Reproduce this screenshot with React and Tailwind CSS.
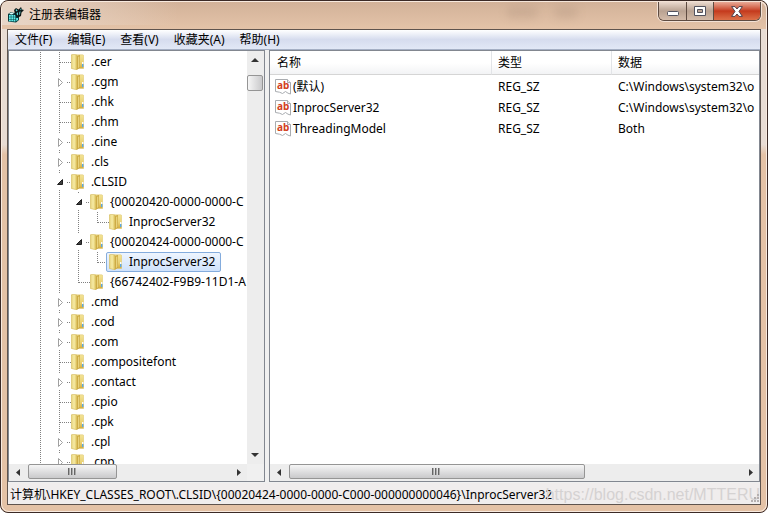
import React from 'react';

const treeItems = [
    { label: '.cer', cells: ['line', 'tee'] },
    { label: '.cgm', cells: ['line', 'closed'] },
    { label: '.chk', cells: ['line', 'tee'] },
    { label: '.chm', cells: ['line', 'tee'] },
    { label: '.cine', cells: ['line', 'closed'] },
    { label: '.cls', cells: ['line', 'closed'] },
    { label: '.CLSID', cells: ['line', 'open'] },
    { label: '{00020420-0000-0000-C', cells: ['line', 'line', 'open'] },
    { label: 'InprocServer32', cells: ['line', 'line', 'line', 'end'] },
    { label: '{00020424-0000-0000-C', cells: ['line', 'line', 'open'] },
    { label: 'InprocServer32', cells: ['line', 'line', 'line', 'end'], selected: true },
    { label: '{66742402-F9B9-11D1-A', cells: ['line', 'line', 'end'] },
    { label: '.cmd', cells: ['line', 'closed'] },
    { label: '.cod', cells: ['line', 'closed'] },
    { label: '.com', cells: ['line', 'closed'] },
    { label: '.compositefont', cells: ['line', 'tee'] },
    { label: '.contact', cells: ['line', 'closed'] },
    { label: '.cpio', cells: ['line', 'tee'] },
    { label: '.cpk', cells: ['line', 'tee'] },
    { label: '.cpl', cells: ['line', 'closed'] },
    { label: '.cpp', cells: ['line', 'closed'] },
];

const values = [
    { name: '(默认)', type: 'REG_SZ', data: 'C:\\Windows\\system32\\o' },
    { name: 'InprocServer32', type: 'REG_SZ', data: 'C:\\Windows\\system32\\o' },
    { name: 'ThreadingModel', type: 'REG_SZ', data: 'Both' },
];

const menus = ['文件(F)', '编辑(E)', '查看(V)', '收藏夹(A)', '帮助(H)'];

// Dotted guide line and expander for one level of the tree
const GuideCell = ({ kind }) => {
    const expander = kind === 'open' || kind === 'closed';

    return (
        <svg width="19" height="20" className="shrink-0 overflow-visible" shapeRendering="crispEdges" aria-hidden="true">
            <g stroke="#808080" strokeDasharray="1 1">
                {(kind === 'line' || kind === 'tee') && <path d="M9.5 0V20" />}
                {kind === 'end' && <path d="M9.5 0V11" />}
                {(kind === 'tee' || kind === 'end') && <path d="M10 10.5H21" />}
                {expander && <path d="M9.5 0V1M9.5 18V20M17 10.5H21" />}
            </g>
            {kind === 'closed' && (
                <path d="M8.5 6.5V14.5L12.5 10.5Z" fill="#fff" stroke="#a0a0a0" shapeRendering="auto" />
            )}
            {kind === 'open' && (
                <path d="M12.5 7.5V12.5H7.5Z" fill="#404040" stroke="#202020" shapeRendering="auto" />
            )}
        </svg>
    );
};

const FolderIcon = () => (
    <svg width="13" height="16" viewBox="0 0 13 16" className="shrink-0" aria-hidden="true">
        <defs>
            <linearGradient id="folderFront" x1="0" x2="1" y1="0" y2="0">
                <stop offset="0" stopColor="#e6d27a" />
                <stop offset="0.5" stopColor="#f6eba6" />
                <stop offset="1" stopColor="#dcc058" />
            </linearGradient>
            <linearGradient id="folderBack" x1="0" x2="0" y1="0" y2="1">
                <stop offset="0" stopColor="#f3e496" />
                <stop offset="0.6" stopColor="#e9d071" />
                <stop offset="1" stopColor="#d2aa3c" />
            </linearGradient>
        </defs>
        <path d="M5 .8H11.7Q12.7 .8 12.7 2V14.4H5Z" fill="url(#folderBack)" stroke="#dcc46c" strokeWidth=".5" />
        <path d="M5.5 2L9 1V13.6L6.5 15.6H5Z" fill="#caa63e" />
        <path d="M7 2.8L8.4 2.2V13L7 14.2Z" fill="#e8d27c" />
        <path d="M.3 1.2Q.3 .5 1.2 .5H4.4Q6 .8 6 2.2V15.7L4.5 15.5L.3 14.4Z" fill="url(#folderFront)" stroke="#d3b95c" strokeWidth=".6" />
        <rect x="11" y="8" width="1.4" height="2" fill="#f8fbff" />
        <rect x="11" y="10" width="1.4" height="3" fill="#5aa9e6" />
    </svg>
);

const StringIcon = () => (
    <svg width="16" height="16" viewBox="0 0 16 16" className="shrink-0" aria-hidden="true">
        <path d="M.5 .5H12.5L15.5 3.5V15L13 14.2L10.5 12.5L7.5 14.5L4.5 13.2L.5 12.5Z" fill="#fff" stroke="#a9acb0" />
        <path d="M12.5 .5V3.5H15.5" fill="#eee" stroke="#a9acb0" />
        <text x="2" y="10" fontFamily="Noto Sans" fontWeight="700" fontSize="10" fill="#d2401c">ab</text>
    </svg>
);

const RegistryIcon = () => (
    <svg width="16" height="16" viewBox="0 0 16 16" aria-hidden="true">
        <path d="M0 7L3 5L6 6L8 5L11 7V13L8 15.5L0 14.5Z" fill="#063a3d" />
        <path d="M3 5.5L6 6L4 7.5L1 7Z" fill="#d8ffff" />
        <path d="M1 8H2.8V9.8H1ZM3.3 8H5.1V9.8H3.3ZM5.6 8H7.4V9.8H5.6ZM1 10.3H2.8V12.1H1ZM3.3 10.3H5.1V12.1H3.3ZM5.6 10.3H7.4V12.1H5.6ZM1 12.6H2.8V14.2H1ZM3.3 12.6H5.1V14.3H3.3ZM5.6 12.6H7.4V14.5H5.6ZM8.2 11H10V13L8.2 14Z" fill="#5ff0ee" />
        <path d="M6 3L8 1L10.5 2.5L13 0L14 2.5L16 3L13.5 5.5L13 9L10 10.5L7.5 8.5Z" fill="#0c1718" />
        <path d="M7.5 3L8.5 2.3L9.6 3.6L8.6 4.6ZM8.6 6L10 5.2V8.4L8.8 7.6ZM11.3 5L12.5 4.2L12 7.6L11.2 8ZM12.4 2L13.2 1.4L13.4 2.8L12.4 3.2Z" fill="#5fd8da" />
    </svg>
);

const Arrow = ({ d }) => (
    <svg width="17" height="17" className="shrink-0" aria-hidden="true">
        <path d={d} fill="#333" />
    </svg>
);

const Grip = () => (
    <svg width="9" height="7" shapeRendering="crispEdges" aria-hidden="true">
        <path d="M.5 0V7M3.5 0V7M6.5 0V7" stroke="#666" />
        <path d="M1.5 0V7M4.5 0V7M7.5 0V7" stroke="#aaa" />
    </svg>
);

const HorizontalScrollbar = ({ thumbClass }) => (
    <div className="flex h-[17px] shrink-0 bg-[#ededed]">
        <Arrow d="M11 5V12L7 8.5Z" />
        <div className="min-w-0 flex-1">
            <div className={`flex h-[15px] items-center justify-center rounded-xs border border-[#959595] bg-linear-to-b from-[#f6f6f6] to-[#c9c9cb] ${thumbClass}`}>
                <Grip />
            </div>
        </div>
        <Arrow d="M7 5V12L11 8.5Z" />
    </div>
);

const TreePane = () => (
    <nav aria-label="注册表项" className="flex w-[257px] shrink-0 flex-col border border-[#828790] bg-white">
        <div className="flex min-h-0 flex-1">
            <ul className="min-w-0 flex-1 overflow-hidden pt-px">
                {treeItems.map((item, index) => (
                    <li key={index} className="flex h-5 items-center pl-[22px]">
                        {item.cells.map((kind, level) => (
                            <GuideCell key={level} kind={kind} />
                        ))}
                        <span
                            className={`-ml-px flex h-5 items-center gap-[7px] rounded-xs border pl-[2px] whitespace-nowrap ${
                                item.selected
                                    ? 'border-[#84acdd] bg-linear-to-b from-[#eef5fe] to-[#cfe2fb] pr-[5px]'
                                    : 'border-transparent'
                            }`}
                        >
                            <FolderIcon />
                            {item.label}
                        </span>
                    </li>
                ))}
            </ul>
            <div className="flex w-[17px] shrink-0 flex-col bg-[#ededed]">
                <Arrow d="M4 11H12L8 7Z" />
                <div className="flex-1 pt-[7px]">
                    <div className="h-4 w-4 rounded-xs border border-[#959595] bg-linear-to-r from-[#f6f6f6] to-[#c9c9cb]" />
                </div>
                <Arrow d="M4 6H12L8 10Z" />
            </div>
        </div>
        <div className="flex">
            <div className="min-w-0 flex-1">
                <HorizontalScrollbar thumbClass="ml-[2px] w-[89px]" />
            </div>
            <div className="w-[17px] bg-[#f0f0f0]" />
        </div>
    </nav>
);

const ValuesPane = () => (
    <section className="flex min-w-0 flex-1 flex-col border border-[#828790] bg-white">
        <div className="min-h-0 flex-1 overflow-hidden">
            <table className="w-full table-fixed border-separate border-spacing-0 text-left whitespace-nowrap">
                <thead>
                    <tr className="h-6 bg-linear-to-b from-white from-50% to-[#f1f2f4]">
                        <th className="w-[222px] border-r border-b border-r-[#e2e4e7] border-b-[#d5d5d5] pl-[7px] font-normal">名称</th>
                        <th className="w-[120px] border-r border-b border-r-[#e2e4e7] border-b-[#d5d5d5] pl-[6px] font-normal">类型</th>
                        <th className="border-b border-b-[#d5d5d5] pl-[6px] font-normal">数据</th>
                    </tr>
                </thead>
                <tbody className="before:block before:h-px">
                    {values.map((value) => (
                        <tr key={value.name} className="h-[21px]">
                            <td className="pl-[5px]">
                                <span className="flex items-center gap-[2px]">
                                    <StringIcon />
                                    {value.name}
                                </span>
                            </td>
                            <td className="pl-[6px]">{value.type}</td>
                            <td className="overflow-hidden pl-[6px]">{value.data}</td>
                        </tr>
                    ))}
                </tbody>
            </table>
        </div>
        <HorizontalScrollbar thumbClass="ml-[2px] w-[65%]" />
    </section>
);

const WindowButtons = () => (
    <div className="flex h-[19px] overflow-hidden rounded-b-md border border-t-0 border-[#5e4b41] shadow-[0_0_0_1px_#f3e2d6]">
        <button type="button" aria-label="最小化" className="flex w-7 items-center justify-center border-r border-[#5e4b41] bg-linear-to-b from-[#ead9ce] via-[#b9a292] to-[#d3bba9]">
            <svg width="12" height="12">
                <rect x=".5" y="6.5" width="11" height="4" rx="1" fill="#fff" stroke="#52525e" />
            </svg>
        </button>
        <button type="button" aria-label="最大化" className="flex w-[27px] items-center justify-center border-r border-[#5e4b41] bg-linear-to-b from-[#ead9ce] via-[#b9a292] to-[#d3bba9]">
            <svg width="12" height="10">
                <path d="M.5 .5H11.5V9.5H.5ZM3.5 3.5V6.5H8.5V3.5Z" fill="#fff" fillRule="evenodd" stroke="#52525e" />
            </svg>
        </button>
        <button type="button" aria-label="关闭" className="flex w-[46px] items-center justify-center bg-linear-to-b from-[#e8a996] via-[#c4391c] to-[#dc7048]">
            <svg width="12" height="11" viewBox="0 0 12 11">
                <path d="M.6 .6H4L6 3L8 .6H11.4L8 5.4L11.4 10.4H8L6 8L4 10.4H.6L4 5.4Z" fill="#fff" stroke="#52404a" />
            </svg>
        </button>
    </div>
);

// Blurred shapes of the window behind the glass title bar
const GlassSmudges = () => (
    <div className="flex items-start gap-4 pt-1" aria-hidden="true">
        <div className="h-3 w-8 rounded-full bg-[#b79a84] opacity-40 blur-xs" />
        <div className="h-3 w-6 rounded-full bg-[#b79a84] opacity-40 blur-xs" />
    </div>
);

const App = () => (
    <div className="flex h-screen flex-col overflow-hidden rounded-lg border border-[#3b2a26] bg-[#e4c2a6] font-['Noto_Sans','Noto_Sans_CJK_SC',sans-serif] text-xs text-black">
        <div className="flex min-h-0 flex-1 flex-col rounded-lg border border-[#f8eadf] bg-linear-to-b from-[#e8dcd4] from-28% to-[#e4c2a6] to-30% px-[5px] pb-[6px]">
            <header className="-mx-[5px] flex h-[27px] shrink-0 items-start rounded-t-lg bg-linear-to-b from-[#d2b299] to-[#e4c3a8] pr-[5px]">
                <h1 className="flex flex-1 items-center gap-[5px] bg-linear-to-r from-[#e8d6c8] to-transparent to-35% pt-[3px] pl-[6px] leading-5">
                    <RegistryIcon />
                    注册表编辑器
                </h1>
                <div className="mr-20">
                    <GlassSmudges />
                </div>
                <WindowButtons />
            </header>
            <main className="flex min-h-0 flex-1 flex-col border border-[#5f544e] bg-[#f0f0f0]">
                <div className="flex h-5 shrink-0 items-center gap-px border-b border-[#a5afc4] bg-linear-to-b from-white via-[#d6dcee] to-[#e2e8f6]">
                    {menus.map((menu) => (
                        <button key={menu} type="button" className="px-[7px] whitespace-nowrap">
                            {menu}
                        </button>
                    ))}
                </div>
                <div className="flex min-h-0 flex-1 gap-1">
                    <TreePane />
                    <ValuesPane />
                </div>
                <footer className="relative mt-px flex h-[21px] shrink-0 items-center overflow-hidden bg-[#f0eded] pt-[2px] pl-[2px]">
                    计算机\HKEY_CLASSES_ROOT\.CLSID\&#123;00020424-0000-0000-C000-000000000046&#125;\InprocServer32
                    <span className="absolute right-0 font-['Liberation_Sans',sans-serif] text-base text-[#d5d2d2]">
                        https://blog.csdn.net/MTTERU
                    </span>
                    <svg width="9" height="9" className="absolute right-px bottom-px" shapeRendering="crispEdges" aria-hidden="true">
                        <path d="M7 0H9V2H7ZM7 3H9V5H7ZM4 3H6V5H4ZM7 6H9V8H7ZM4 6H6V8H4ZM1 6H3V8H1Z" fill="#b5b0b0" />
                    </svg>
                </footer>
            </main>
        </div>
    </div>
);

export default App;
